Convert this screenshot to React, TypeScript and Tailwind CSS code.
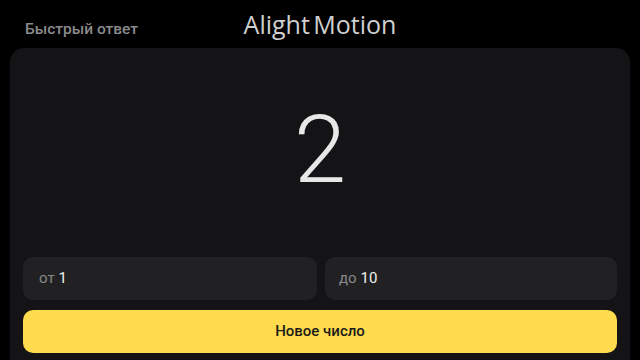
import React from "react";

export default function App() {
  return (
    <div className="relative w-[640px] h-[360px] overflow-hidden bg-black" style={{ fontFamily: "Roboto, 'Noto Sans', sans-serif" }}>
      <div className="h-[48px] pl-[25px] pt-[17px]">
        <span className="text-[15.5px] leading-[20px] font-medium text-[#8a8a8c]">Быстрый ответ</span>
      </div>
      <div
        className="absolute top-[8px] left-1/2 -translate-x-1/2 text-[25px] leading-[33px] font-medium text-[#d0d0d0] whitespace-nowrap [word-spacing:-3px]"
        style={{ fontFamily: "'Open Sans', 'Noto Sans', sans-serif" }}
      >
        Alight Motion
      </div>
      <div className="mx-[10px] h-[340px] rounded-[14px] bg-[#141416] px-[13px] pt-[55px] flex flex-col">
        <div className="h-[94px] text-[94px] leading-none font-light text-[#e8e8e8] text-center">2</div>
        <div className="mt-[60px] flex gap-[8px]">
          <div className="flex-1 h-[43px] rounded-[10px] bg-[#212123] flex items-center pl-[16px] text-[15px] font-normal">
            <span className="text-[#88888a]">от</span>
            <span className="ml-[4px] text-[#f0f0f0]">1</span>
          </div>
          <div className="flex-1 h-[43px] rounded-[10px] bg-[#212123] flex items-center pl-[14px] text-[15px] font-normal">
            <span className="text-[#88888a]">до</span>
            <span className="ml-[4px] text-[#f0f0f0]">10</span>
          </div>
        </div>
        <div className="mt-[10px] h-[43px] rounded-[10px] bg-[#ffdb4d] flex items-center justify-center text-[15px] font-medium text-[#1a1a1a]">
          Новое число
        </div>
      </div>
    </div>
  );
}
